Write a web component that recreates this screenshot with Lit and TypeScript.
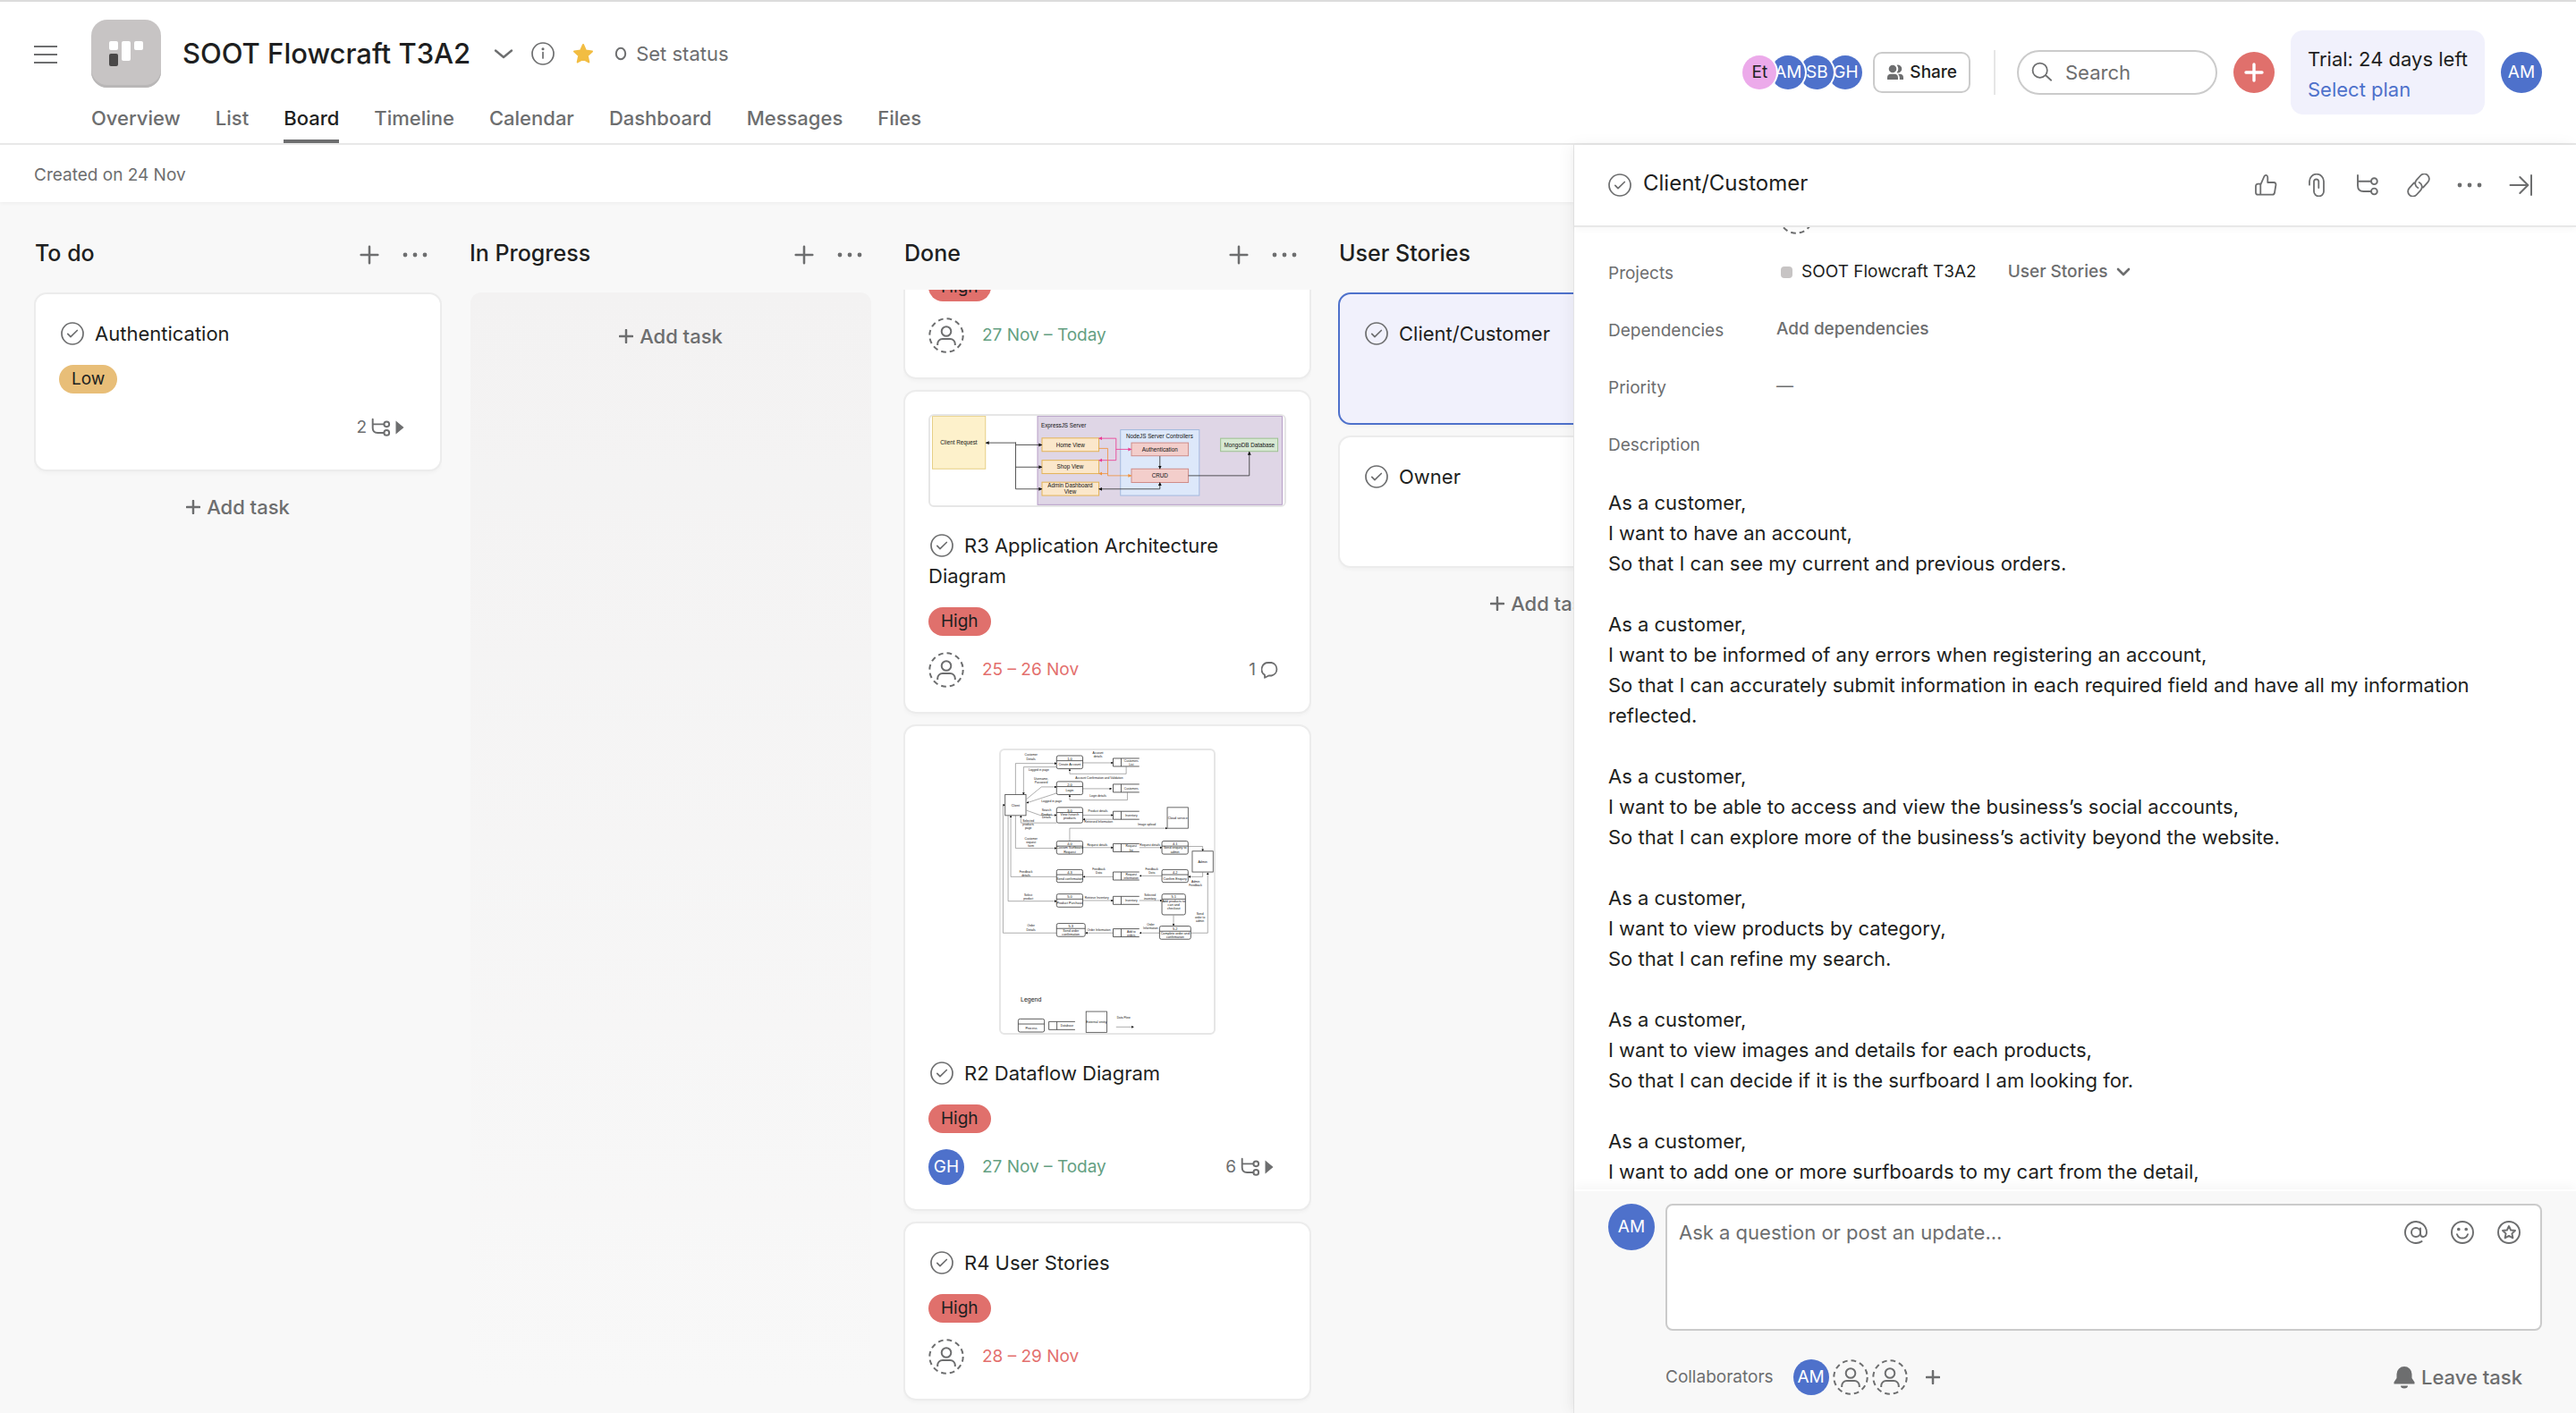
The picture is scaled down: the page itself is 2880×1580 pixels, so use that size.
import { LitElement, html, svg, css, nothing, type TemplateResult } from "lit";
import { customElement, property } from "lit/decorators.js";
import { classMap } from "lit/directives/class-map.js";

/* ---------- icons ---------- */

const line = (size: number, body: TemplateResult, width = 2) => html`
  <svg width=${size} height=${size} viewBox="0 0 26 26" fill="none" stroke="currentColor"
    stroke-width=${width} stroke-linecap="round" stroke-linejoin="round" aria-hidden="true">${body}</svg>`;

const subtaskShape = svg`<path d="M2 2V13.5Q2 20 8.5 20H17M2 8.7H17" /><circle cx="20.4" cy="8.7" r="3.4" /><circle cx="20.4" cy="20" r="3.4" />`;

const icons = {
  menu: html`<svg width="26" height="20" viewBox="0 0 26 20" stroke="currentColor" stroke-width="2" aria-hidden="true">
    <path d="M0 1H26M0 10H26M0 19H26" /></svg>`,
  chevron: html`<svg width="22" height="22" viewBox="0 0 22 22" fill="none" stroke="currentColor" stroke-width="2.4"
    stroke-linecap="round" stroke-linejoin="round" aria-hidden="true"><path d="M2 7.5L11 15L20 7.5" /></svg>`,
  chevronSmall: html`<svg width="16" height="16" viewBox="0 0 16 16" fill="none" stroke="currentColor" stroke-width="2.6"
    stroke-linecap="round" stroke-linejoin="round" aria-hidden="true"><path d="M2 5L8 11L14 5" /></svg>`,
  info: line(26, svg`<circle cx="13" cy="13" r="12" /><path d="M13 11.5V18" /><circle cx="13" cy="7.8" r="0.7" fill="currentColor" />`, 1.7),
  star: html`<svg width="24" height="24" viewBox="0 0 24 24" fill="currentColor" stroke="currentColor" stroke-width="2"
    stroke-linejoin="round" aria-hidden="true">
    <path d="M12 2L15 8.6L22 9.4L16.8 14.2L18.3 21.4L12 17.8L5.7 21.4L7.2 14.2L2 9.4L9 8.6Z" /></svg>`,
  ring: html`<svg width="14" height="16" viewBox="0 0 14 16" fill="none" stroke="currentColor" stroke-width="2"
    aria-hidden="true"><ellipse cx="7" cy="8" rx="5.2" ry="6.2" /></svg>`,
  people: html`<svg width="20" height="18" viewBox="0 0 20 18" fill="currentColor" aria-hidden="true">
    <circle cx="7" cy="5" r="4.3" />
    <path d="M11.6 0.8A4.4 4.4 0 1 1 11.6 9.2A6 6 0 0 0 11.6 0.8Z" />
    <path d="M1 16.5V14.5A4 4 0 0 1 5 10.8H9A4 4 0 0 1 13 14.5V16.5Q13 17 12.5 17H1.500Q1 17 1 16.5Z" />
    <path d="M13 10.8H15A4 4 0 0 1 19 14.5V16.5Q19 17 18.5 17H14.8V14.500A5.500 5.500 0 0 0 13 10.8Z" /></svg>`,
  search: line(24, svg`<circle cx="10.5" cy="10.5" r="8.8" /><path d="M17.5 16.5L24 22.5" />`, 1.9),
  plusBold: line(26, svg`<path d="M13 4V22M4 13H22" />`, 3.4),
  plus: line(22, svg`<path d="M13 2V24M2 13H24" />`, 3),
  plusSmall: line(16, svg`<path d="M13 1.5V24.5M1.5 13H24.5" />`, 4),
  dots: html`<svg width="28" height="6" viewBox="0 0 28 6" fill="currentColor" aria-hidden="true">
    <circle cx="3" cy="3" r="2.4" /><circle cx="14" cy="3" r="2.4" /><circle cx="25" cy="3" r="2.4" /></svg>`,
  check: line(26, svg`<circle cx="13" cy="13" r="12" /><path d="M7.8 13.3L11 16.7L18.3 9.5" />`, 1.7),
  thumb: line(26, svg`<path d="M7.3 11.7H4.5Q2 11.7 2 14.2V21.2Q2 23.7 4.5 23.7H7.3ZM7.3 12.7L11.3 3.5Q12.3 1.6 14 2Q15.3 2.4 15.3 4.5V10H22Q24.8 10.2 24.4 13L23 21.5Q22.6 23.7 20.5 23.7H7.3" />`, 1.8),
  clip: line(26, svg`<path d="M5 12.7V8.7A8 8 0 0 1 21 8.7V20A5.5 5.5 0 0 1 10 20V8.7A2.7 2.7 0 0 1 15.3 8.7V16" />`, 1.8),
  subtask: line(26, subtaskShape, 1.9),
  subtaskSmall: line(22, subtaskShape, 2.3),
  link: line(26, svg`<g transform="rotate(-48 13 13)"><path d="M14.500 18.5H22.5A5.5 5.5 0 0 0 22.5 7.5H15.5A5.5 5.5 0 0 0 10.3 14.5M11.5 7.5H3.5A5.5 5.5 0 0 0 3.5 18.5H10.5A5.5 5.5 0 0 0 15.7 11.5" /></g>`, 1.8),
  collapse: line(26, svg`<path d="M1.5 13H21M12.3 4L21.3 13L12.3 22M25 2V24" />`, 2),
  play: html`<svg width="10" height="16" viewBox="0 0 10 16" fill="currentColor" aria-hidden="true"><path d="M0.5 0.5L9.5 8L0.5 15.5Z" /></svg>`,
  bubble: html`<svg width="20" height="20" viewBox="0 0 20 20" fill="none" stroke="currentColor" stroke-width="1.8"
    stroke-linejoin="round" aria-hidden="true"><path d="M4 15.8A7.5 7.5 0 0 1 8.5 2H11.5A7.4 7.4 0 0 1 11.5 16.5H8.5L4 18.8Z" /></svg>`,
  at: line(26, svg`<circle cx="13" cy="13" r="5" /><path d="M18 8.5V14.5Q18 18 21.3 18Q25 17.5 25 13A12 12 0 1 0 19.5 23.1" />`, 1.9),
  smile: line(26, svg`<circle cx="13" cy="13" r="12" /><path d="M7 15.2Q8.5 19.5 13 19.5Q17.5 19.5 19 15.2" /><circle cx="8.8" cy="9.5" r="0.9" fill="currentColor" /><circle cx="17.2" cy="9.5" r="0.9" fill="currentColor" />`, 1.9),
  starRing: line(26, svg`<circle cx="13" cy="13" r="12" /><path d="M13 6L15.1 10.5L20 11L16.4 14.4L17.4 19.3L13 16.9L8.6 19.3L9.6 14.4L6 11L10.9 10.5Z" />`, 1.9),
  bell: html`<svg width="26" height="26" viewBox="0 0 26 26" fill="currentColor" aria-hidden="true">
    <path d="M13 1A8.5 8.5 0 0 0 4.5 9.5V14L1.5 18.5V20.5H24.5V18.5L21.5 14V9.5A8.5 8.5 0 0 0 13 1ZM9 22.5A4 3 0 0 0 17 22.5Z" /></svg>`,
  person: html`<svg width="40" height="40" viewBox="0 0 40 40" fill="none" stroke="currentColor" stroke-width="2" aria-hidden="true">
    <circle cx="20" cy="20" r="18.7" stroke-dasharray="5.7 4.092" />
    <circle cx="20" cy="15.5" r="5.3" /><path d="M10.2 31V29.5A5.5 5.5 0 0 1 15.7 24H24.3A5.5 5.5 0 0 1 29.8 29.5V31" /></svg>`,
};

/* ---------- attachment previews ---------- */

const box = (x: number, y: number, w: number, h: number, fill: string, stroke: string) =>
  svg`<rect x=${x} y=${y} width=${w} height=${h} fill=${fill} stroke=${stroke} stroke-width="3" />`;
const label = (x: number, y: number, s: string, size = 19) =>
  svg`<text x=${x} y=${y} font-size=${size} text-anchor="middle" fill="#111">${s}</text>`;

const architecture = html`
  <svg class="art" viewBox="29 41 1183 302" font-family="Liberation Sans, Arial, sans-serif" role="img" aria-label="Application architecture">
    <defs>
      <marker id="k" markerWidth="14" markerHeight="14" refX="11" refY="6" orient="auto-start-reverse" markerUnits="userSpaceOnUse"><path d="M0 0L12 6L0 12Z" fill="#111" /></marker>
      <marker id="p" markerWidth="14" markerHeight="14" refX="11" refY="6" orient="auto-start-reverse" markerUnits="userSpaceOnUse"><path d="M0 0L12 6L0 12Z" fill="#ea3a92" /></marker>
      <marker id="o" markerWidth="14" markerHeight="14" refX="11" refY="6" orient="auto-start-reverse" markerUnits="userSpaceOnUse"><path d="M0 0L12 6L0 12Z" fill="#f0923c" /></marker>
    </defs>
    ${box(30, 42, 179, 178, "#fdf1cb", "#e6cf85")}
    ${box(385, 42, 826, 299, "#dfd6e6", "#b59cc6")}
    ${box(665, 88, 266, 222, "#dde8fa", "#a3b9de")}
    ${[116, 191, 265].map((y) => box(400, y, 192, 45, "#fbe7cb", "#e3b356"))}
    ${box(702, 132, 192, 44, "#f3cecb", "#cf8c88")}
    ${box(702, 220, 192, 46, "#f3cecb", "#cf8c88")}
    ${box(1003, 117, 193, 44, "#d7e8d3", "#9cc190")}
    <g fill="none" stroke="#333" stroke-width="2.5">
      <path d="M311 132H210" marker-end="url(#k)" />
      <path d="M311 130V288H400" marker-end="url(#k)" />
      <path d="M311 139H400" marker-end="url(#k)" /><path d="M311 214H400" marker-end="url(#k)" />
      <path d="M798 177V220" marker-end="url(#k)" />
      <path d="M592 288H798V266" marker-start="url(#k)" marker-end="url(#k)" />
      <path d="M894 243H1100V162" marker-end="url(#k)" />
    </g>
    <path d="M592 117H650V191H592" fill="none" stroke="#ea3a92" stroke-width="2.5" marker-start="url(#p)" marker-end="url(#p)" />
    <path d="M650 154H702" fill="none" stroke="#ea3a92" stroke-width="2.5" marker-end="url(#p)" />
    <path d="M592 151H622V243H702" fill="none" stroke="#f0923c" stroke-width="2.5" marker-end="url(#o)" />
    <path d="M622 236H592" fill="none" stroke="#f0923c" stroke-width="2.5" marker-end="url(#o)" />
    ${label(119, 138, "Client Request")}${label(473, 79, "ExpressJS Server")}${label(496, 146, "Home View")}
    ${label(495, 220, "Shop View")}${label(495, 282, "Admin Dashboard")}${label(495, 304, "View")}
    ${label(797, 116, "NodeJS Server Controllers")}${label(798, 161, "Authentication")}
    ${label(798, 249, "CRUD")}${label(1100, 146, "MongoDB Database")}
  </svg>`;

const process = (x: number, y: number, w: number, h: number, id: string, lines: string[]) => svg`
  <rect x=${x} y=${y} width=${w} height=${h} rx="6" fill="#fff" stroke="#444" stroke-width="2.6" />
  <path d="M${x} ${y + 17}H${x + w}" stroke="#444" stroke-width="2.6" />
  ${label(x + w / 2, y + 14, id, 12)}
  ${lines.map((s, i) => label(x + w / 2, y + (lines.length > 1 ? 27 : 34) + i * 13, s, 11))}`;
const store = (y: number, lines: string[], x = 731, w = 88) => svg`
  <path d="M${x + w} ${y}H${x}V${y + 27}H${x + w}M${x + 27} ${y}V${y + 27}" fill="none" stroke="#444" stroke-width="2.6" />
  ${lines.map((s, i) => label(x + 61, y + (lines.length > 1 ? 12 : 18) + i * 13, s, 10))}`;
const entity = (x: number, y: number, s: string) => svg`
  <rect x=${x} y=${y} width="70" height="70" fill="#fff" stroke="#444" stroke-width="2.4" />${label(x + 35, y + 39, s, 11)}`;

const flows = [
  "M403 292V187H541", "M541 199H430V292", "M629 185H731", "M775 198V222H585V206",
  "M440 307L490 266H541", "M541 287L440 320", "M629 272H726", "M779 285V310H585V293",
  "M440 345L485 361H541", "M541 387H421V362", "M629 361H731", "M731 375H630",
  "M585 448V405H913", "M403 362V472H541", "M629 470H731", "M819 470H895", "M984 466H1032V482",
  "M1032 553V568H984", "M895 565H820", "M731 568H630", "M541 568H387V362",
  "M378 362V650H541", "M629 648H731", "M819 648H895", "M934 698V733", "M992 757H1049V554",
  "M887 757H820", "M731 757H638", "M541 757H361V327H368", "M741 1073H800",
];
const notes: [number, number, string][] = [
  [455, 162, "Customer"], [455, 175, "Details"], [680, 154, "Account"], [680, 167, "details"], [481, 213, "Logged in page"],
  [684, 239, "Account Confirmation and Validation"], [489, 241, "Username,"], [489, 254, "Password"], [680, 299, "Login details"],
  [524, 317, "Logged in page"], [507, 348, "Search"], [507, 361, "Product"], [507, 373, "Details"], [680, 351, "Product details"],
  [682, 386, "Retrieved Information"], [446, 383, "Selected"], [446, 396, "products"], [446, 408, "page"], [844, 397, "Image upload"],
  [455, 443, "Customer"], [455, 456, "request"], [455, 468, "form"], [678, 465, "Request details"], [855, 465, "Request details"],
  [438, 554, "Feedback"], [438, 567, "details"], [683, 545, "Feedback"], [683, 557, "Data"], [861, 545, "Feedback"], [861, 557, "Data"],
  [1008, 588, "Admin"], [1008, 601, "Feedback"], [446, 632, "Select"], [446, 644, "product"], [676, 641, "Retrieve Inventory"],
  [855, 632, "Selected"], [855, 644, "inventory"], [1023, 695, "Send"], [1023, 708, "order to"], [1023, 720, "admin"],
  [455, 736, "Order"], [455, 749, "Details"], [683, 751, "Order Information"], [857, 732, "Order"], [857, 744, "Information"], [766, 1046, "Data Flow"],
];

const dataflow = html`
  <svg class="art" viewBox="354 143 715 950" font-family="Liberation Sans, Arial, sans-serif" role="img" aria-label="Dataflow diagram">
    <defs><marker id="a" markerWidth="9" markerHeight="9" refX="7" refY="4" orient="auto" markerUnits="userSpaceOnUse"><path d="M0 0L8 4L0 8Z" fill="#111" /></marker></defs>
    ${flows.map((d) => svg`<path d=${d} fill="none" stroke="#777" stroke-width="1.8" marker-end="url(#a)" />`)}
    ${process(541, 161, 88, 44, "1.0", ["Create Account"])}${process(541, 248, 88, 44, "2.0", ["Login"])}
    ${process(541, 335, 88, 52, "3.0", ["View /search", "products"])}${process(541, 448, 88, 44, "4.0", ["Custom Surfboard", "Request"])}
    ${process(895, 448, 88, 44, "4.1", ["Send enquiry to", "admin"])}${process(541, 544, 88, 43, "4.3", ["Send confirmation"])}
    ${process(895, 544, 88, 43, "4.2", ["Confirm Enquiry"])}${process(541, 626, 88, 44, "5.0", ["Product Purchase"])}
    ${process(895, 626, 79, 70, "5.1", ["Add products to", "cart and", "checkout"])}
    ${process(541, 725, 96, 44, "5.3", ["Send order", "confirmation"])}${process(887, 734, 105, 44, "5.2", ["Complete order and", "confirmation"])}
    ${process(412, 1046, 88, 44, "", ["Process"])}
    ${store(170, ["Customers", "List"])}${store(257, ["Customers"])}${store(348, ["Inventory"])}${store(457, ["Request", "list"])}
    ${store(552, ["Request", "information"])}${store(634, ["Inventory"])}${store(743, ["Add to", "orders"])}${store(1055, ["Database"], 515)}
    ${entity(368, 292, "Client")}${entity(913, 335, "Cloud service")}${entity(997, 482, "Admin")}${entity(640, 1021, "External entity")}
    ${notes.map(([x, y, s]) => label(x, y, s, 10))}
    ${label(455, 989, "Legend", 21)}
  </svg>`;

/* ---------- data ---------- */

interface Task {
  title: string;
  tag?: "High" | "Low";
  cover?: "architecture" | "dataflow";
  owner?: string;
  date?: string;
  late?: boolean;
  subtasks?: number;
  comments?: number;
  selected?: boolean;
}
interface Column { name: string; tasks: Task[]; scroll?: number }

const columns: Column[] = [
  { name: "To do", tasks: [{ title: "Authentication", tag: "Low", subtasks: 2 }] },
  { name: "In Progress", tasks: [] },
  {
    name: "Done",
    scroll: 103,
    tasks: [
      { title: "", tag: "High", date: "27 Nov – Today" },
      { title: "R3 Application Architecture Diagram", cover: "architecture", tag: "High", date: "25 – 26 Nov", late: true, comments: 1 },
      { title: "R2 Dataflow Diagram", cover: "dataflow", tag: "High", owner: "GH", date: "27 Nov – Today", subtasks: 6 },
      { title: "R4 User Stories", tag: "High", date: "28 – 29 Nov", late: true },
    ],
  },
  { name: "User Stories", tasks: [{ title: "Client/Customer", selected: true }, { title: "Owner" }] },
];

const stories = [
  ["I want to have an account,", "So that I can see my current and previous orders."],
  ["I want to be informed of any errors when registering an account,", "So that I can accurately submit information in each required field and have all my information reflected."],
  ["I want to be able to access and view the business’s social accounts,", "So that I can explore more of the business’s activity beyond the website."],
  ["I want to view products by category,", "So that I can refine my search."],
  ["I want to view images and details for each products,", "So that I can decide if it is the surfboard I am looking for."],
  ["I want to add one or more surfboards to my cart from the detail,"],
];

/* ---------- shared styles ---------- */

const base = css`
  * { box-sizing: border-box; }
  button, input, textarea, select { font: inherit; color: inherit; background: none; border: 0; padding: 0; margin: 0; }
  button { display: inline-flex; align-items: center; justify-content: center; cursor: pointer; }
  svg { display: block; flex: none; }
  h1, h2, h3, p { margin: 0; font-weight: inherit; font-size: inherit; }
  a { color: inherit; text-decoration: none; }
  .avatar {
    display: inline-flex; align-items: center; justify-content: center; flex: none;
    width: 40px; height: 40px; border-radius: 50%;
    background: #4e71cb; color: #fff; font-size: 19px; line-height: 24px;
  }
  .avatar.large { width: 52px; height: 52px; }
`;

/* ---------- card ---------- */

@customElement("task-card")
export class TaskCard extends LitElement {
  @property({ attribute: false }) task!: Task;

  static styles = [base, css`
    :host { display: block; }
    .card {
      display: flex; flex-direction: column; align-items: flex-start; gap: 18px;
      min-height: 148px; padding: 27px 26px; border: 2px solid #ececec; border-radius: 14px;
      background: #fff; box-shadow: 0 2px 4px rgba(0, 0, 0, 0.03);
    }
    .card.covered { padding-top: 25px; }
    .card.selected { background: #f1f1fc; border-color: #4e71cb; }
    .cover {
      align-self: center; border: 2px solid #e6e6e6; border-radius: 6px; overflow: hidden; margin-bottom: 8px;
      background: #fff;
    }
    .cover.architecture { width: 100%; height: 104px; }
    .cover.dataflow { width: 242px; height: 320px; }
    .art { width: 100%; height: 100%; }
    .title { font-size: 22px; line-height: 34px; color: #1e1f21; }
    .tick { color: #6d6e6f; vertical-align: -5px; margin: 0 12px 0 2px; }
    .tag { border-radius: 16px; padding: 0 14px; font-size: 19px; line-height: 32px; color: #1e1f21; }
    .high { background: #e0706c; }
    .low { background: #e8be78; }
    .meta { display: flex; align-items: center; align-self: stretch; height: 40px; font-size: 19px; line-height: 24px; color: #6d6e6f; }
    .date { margin-left: 20px; color: #64a082; }
    .date.late { color: #e36f6d; }
    .counts { display: flex; align-items: center; gap: 5px; margin-left: auto; padding-right: 14px; }
    .counts.talk { padding-right: 8px; gap: 6px; }
  `];

  render() {
    const t = this.task;
    return html`
      <article class=${classMap({ card: true, covered: !!t.cover, selected: !!t.selected })}>
        ${t.cover ? html`<div class="cover ${t.cover}">${t.cover === "architecture" ? architecture : dataflow}</div>` : nothing}
        <h3 class="title"><button class="tick" aria-label="Mark complete">${icons.check}</button>${t.title}</h3>
        ${t.tag ? html`
          <span class="tag ${t.tag.toLowerCase()}">${t.tag}</span>
          <div class="meta">
            ${t.date ? html`
              ${t.owner ? html`<span class="avatar">${t.owner}</span>` : icons.person}
              <span class=${classMap({ date: true, late: !!t.late })}>${t.date}</span>` : nothing}
            ${t.subtasks ? html`<span class="counts">${t.subtasks}${icons.subtaskSmall}${icons.play}</span>` : nothing}
            ${t.comments ? html`<span class="counts talk">${t.comments}${icons.bubble}</span>` : nothing}
          </div>` : nothing}
      </article>`;
  }
}

/* ---------- column ---------- */

@customElement("board-column")
export class BoardColumn extends LitElement {
  @property({ attribute: false }) column!: Column;

  static styles = [base, css`
    :host { display: flex; flex-direction: column; flex: 0 0 456px; min-height: 0; color: #6d6e6f; }
    .head { display: flex; align-items: center; gap: 26px; height: 98px; padding: 20px 16px 0 1px; flex: none; }
    .name { flex: 1; font-size: 25px; line-height: 34px; font-weight: 500; color: #1e1f21; padding-bottom: 4px; }
    .list { flex: 1; min-height: 0; overflow-y: auto; scrollbar-width: none; display: flex; flex-direction: column; gap: 12px; padding: 3px 0 24px; }
    .list > * { flex: none; }
    .add { gap: 7px; height: 56px; align-self: center; font-size: 22px; line-height: 34px; font-weight: 500; }
    .list > .empty {
      flex: 1 0 auto; display: flex; flex-direction: column; align-items: center; padding-top: 21px; margin: 0 6px 0 2px;
      border-radius: 12px; background: linear-gradient(#f3f2f2, #f8f8f8);
    }
  `];

  async firstUpdated() {
    const list = this.renderRoot.querySelector<HTMLElement>(".list")!;
    await Promise.all([...this.renderRoot.querySelectorAll<TaskCard>("task-card")].map((c) => c.updateComplete));
    list.scrollTop = this.column.scroll ?? 0;
  }

  render() {
    const c = this.column;
    const add = html`<button class="add">${icons.plusSmall}<span>Add task</span></button>`;
    return html`
      <div class="head">
        <h2 class="name">${c.name}</h2>
        <button aria-label="Add task to ${c.name}">${icons.plus}</button>
        <button aria-label="More actions for ${c.name}">${icons.dots}</button>
      </div>
      <div class="list">
        ${c.tasks.length
          ? html`${c.tasks.map((t) => html`<task-card .task=${t}></task-card>`)}${c.scroll ? nothing : add}`
          : html`<div class="empty">${add}</div>`}
      </div>`;
  }
}

/* ---------- header ---------- */

@customElement("app-header")
export class AppHeader extends LitElement {
  static styles = [base, css`
    :host {
      display: flex; align-items: stretch; justify-content: space-between; padding: 0 38px;
      background: #fff; border-top: 2px solid #dcdcdc; border-bottom: 2px solid #e8e8e8; color: #6d6e6f;
    }
    .left { display: flex; align-items: flex-start; gap: 38px; padding-top: 20px; }
    .menu { height: 78px; }
    .project { display: flex; flex-direction: column; gap: 6px; }
    .top { display: flex; align-items: center; height: 76px; }
    .logo {
      width: 78px; height: 76px; border-radius: 18px; background: #c7c4c4; box-shadow: inset 0 -3px #b9b7b7;
      display: grid; place-items: center; margin-right: 24px;
    }
    .name { font-size: 31px; line-height: 40px; font-weight: 500; color: #1e1f21; margin-right: 26px; }
    .info { margin: 0 20px; }
    .fav { color: #f2bd42; }
    .status { gap: 10px; margin-left: 23px; font-size: 22px; line-height: 34px; }
    .tabs { display: flex; gap: 39px; font-size: 22px; line-height: 34px; font-weight: 500; }
    .tab { height: 56px; padding: 11px 0; }
    .tab.on { color: #1e1f21; box-shadow: inset 0 -4px #6d6e6f; }
    .right { display: flex; align-items: center; }
    .team { display: flex; margin-right: 12px; }
    .team .avatar { position: relative; width: 38px; height: 38px; margin-left: -6px; box-shadow: 0 0 0 2px #fff; }
    .team .avatar:nth-child(1) { z-index: 4; background: #ecaaea; color: #1e1f21; }
    .team .avatar:nth-child(2) { z-index: 3; }
    .team .avatar:nth-child(3) { z-index: 2; }
    .share {
      gap: 6px; height: 46px; padding: 0 13px; border: 2px solid #cbcbcb; border-radius: 10px;
      font-size: 19px; line-height: 24px; font-weight: 500;
    }
    .share span { color: #1e1f21; }
    .rule { width: 2px; height: 50px; background: #e6e6e6; margin: 0 24px 0 26px; }
    .search {
      display: flex; align-items: center; gap: 14px; width: 224px; height: 50px; padding: 0 14px;
      border: 2px solid #cbcbcb; border-radius: 25px; font-size: 22px; line-height: 34px;
    }
    .search input { width: 100%; min-width: 0; outline: none; }
    .search input::placeholder { color: #6d6e6f; opacity: 1; }
    .create { width: 46px; height: 46px; border-radius: 50%; background: #e0706c; color: #fff; margin: 0 18px; }
    .trial { padding: 15px 19px 11px; border-radius: 14px; background: #f1f1fc; font-size: 22px; line-height: 34px; color: #1e1f21; margin-right: 18px; }
    .plan { display: block; color: #4e71cb; }
    .me { width: 46px; height: 46px; }
  `];

  render() {
    return html`
      <div class="left">
        <button class="menu" aria-label="Menu">${icons.menu}</button>
        <div class="project">
          <div class="top">
            <span class="logo"><svg width="40" height="30" viewBox="0 0 40 30" aria-hidden="true">
              <rect x="1" y="1" width="10" height="10" rx="2" fill="#fff" /><rect x="15" y="1" width="10" height="22" rx="2" fill="#fff" />
              <rect x="29" y="1" width="10" height="10" rx="2" fill="#fff" /><rect x="1" y="15" width="10" height="14" rx="2" fill="#4a4848" /></svg></span>
            <h1 class="name">SOOT Flowcraft T3A2</h1>
            <button aria-label="Project actions">${icons.chevron}</button>
            <button class="info" aria-label="Project details">${icons.info}</button>
            <button class="fav" aria-label="Favourite">${icons.star}</button>
            <button class="status">${icons.ring}<span>Set status</span></button>
          </div>
          <nav class="tabs">
            ${["Overview", "List", "Board", "Timeline", "Calendar", "Dashboard", "Messages", "Files"].map(
              (t) => html`<a href="#" class=${classMap({ tab: true, on: t === "Board" })}>${t}</a>`)}
          </nav>
        </div>
      </div>
      <div class="right">
        <div class="team">${["Et", "AM", "SB", "GH"].map((n) => html`<span class="avatar">${n}</span>`)}</div>
        <button class="share">${icons.people}<span>Share</span></button>
        <span class="rule"></span>
        <label class="search">${icons.search}<input type="text" placeholder="Search" aria-label="Search" /></label>
        <button class="create" aria-label="Create">${icons.plusBold}</button>
        <div class="trial">Trial: 24 days left<a class="plan" href="#">Select plan</a></div>
        <button class="avatar me">AM</button>
      </div>`;
  }
}

/* ---------- task details ---------- */

@customElement("task-pane")
export class TaskPane extends LitElement {
  static styles = [base, css`
    :host {
      display: flex; flex-direction: column; min-width: 0; min-height: 0; background: #fff; color: #6d6e6f;
      position: relative; z-index: 1; box-shadow: -1px 0 #e4e4e4, -4px 0 16px rgba(0, 0, 0, 0.05);
      font-size: 19px; line-height: 24px;
    }
    .head {
      display: flex; align-items: center; height: 92px; flex: none; padding: 0 49px 0 38px;
      border-bottom: 2px solid #e8e8e8; box-shadow: 0 2px 8px rgba(0, 0, 0, 0.04); position: relative;
    }
    .name { font-size: 24px; line-height: 34px; color: #1e1f21; margin: 0 auto 4px 13px; }
    .tools { display: flex; gap: 31px; }
    .tools button { width: 26px; height: 26px; }
    .body { flex: 1; min-height: 0; overflow-y: auto; scrollbar-width: none; padding: 0 38px 40px; }
    .row { display: grid; grid-template-columns: 188px 1fr; align-items: center; height: 64px; }
    .value { display: flex; align-items: center; padding-bottom: 4px; }
    .who { padding: 0 0 0 2px; }
    .dot { width: 13px; height: 13px; border-radius: 4px; background: #c7c4c4; margin: 0 10px 0 5px; }
    .link { color: #1e1f21; margin-right: 35px; }
    .strong, select { font-weight: 500; }
    select { appearance: none; margin-right: 9px; line-height: 24px; }
    .story { font-size: 22px; line-height: 34px; color: #1e1f21; margin: 0 0 34px; }
    .story:first-of-type { margin-top: 15px; }
    .foot {
      flex: none; display: grid; grid-template-columns: 52px 1fr; column-gap: 12px; row-gap: 32px; align-items: start;
      padding: 14px 38px 20px; background: #f8f8f8; border-top: 2px solid #fff; position: relative;
      box-shadow: 0 -4px 12px rgba(0, 0, 0, 0.04);
    }
    .reply {
      display: flex; align-items: flex-start; gap: 26px; height: 142px; padding: 13px 22px 13px 13px;
      background: #fff; border: 2px solid #cbcbcb; border-radius: 8px; font-size: 22px; line-height: 34px;
    }
    .reply textarea { flex: 1; height: 100%; resize: none; outline: none; }
    .reply textarea::placeholder { color: #6d6e6f; opacity: 1; }
    .reply button { height: 34px; }
    .people { grid-column: 2; display: flex; align-items: center; gap: 4px; height: 40px; }
    .people > span:first-child { margin-right: 18px; }
    .more { margin-left: 16px; }
    .leave { gap: 6px; margin: 0 22px 0 auto; font-size: 22px; line-height: 34px; font-weight: 500; }
  `];

  firstUpdated() {
    this.renderRoot.querySelector(".body")!.scrollTop = 44;
  }

  render() {
    return html`
      <div class="head">
        <button aria-label="Mark complete">${icons.check}</button>
        <h2 class="name">Client/Customer</h2>
        <div class="tools">
          <button aria-label="Like">${icons.thumb}</button>
          <button aria-label="Attach">${icons.clip}</button>
          <button aria-label="Subtasks">${icons.subtask}</button>
          <button aria-label="Copy link">${icons.link}</button>
          <button aria-label="More">${icons.dots}</button>
          <button aria-label="Close details">${icons.collapse}</button>
        </div>
      </div>
      <div class="body">
        <div class="row"><span></span><div class="value who">${icons.person}</div></div>
        <div class="row"><span>Projects</span>
          <div class="value"><i class="dot"></i><a class="link" href="#">SOOT Flowcraft T3A2</a>
            <select aria-label="Section"><option>User Stories</option></select>${icons.chevronSmall}</div></div>
        <div class="row"><span>Dependencies</span><div class="value"><button class="strong">Add dependencies</button></div></div>
        <div class="row"><span>Priority</span><div class="value">—</div></div>
        <div class="row"><span>Description</span></div>
        ${stories.map((s) => html`<p class="story">As a customer,${s.map((l) => html`<br />${l}`)}</p>`)}
      </div>
      <div class="foot">
        <span class="avatar large">AM</span>
        <div class="reply">
          <textarea aria-label="Comment" placeholder="Ask a question or post an update..."></textarea>
          <button aria-label="Mention">${icons.at}</button>
          <button aria-label="Emoji">${icons.smile}</button>
          <button aria-label="Appreciation">${icons.starRing}</button>
        </div>
        <div class="people">
          <span>Collaborators</span><span class="avatar">AM</span>${icons.person}${icons.person}
          <button class="more" aria-label="Add collaborator">${icons.plusSmall}</button>
          <button class="leave">${icons.bell}<span>Leave task</span></button>
        </div>
      </div>`;
  }
}

/* ---------- page ---------- */

@customElement("app-root")
export class AppRoot extends LitElement {
  static styles = [base, css`
    :host {
      display: flex; flex-direction: column; height: 100vh; overflow: hidden; background: #f8f8f8;
      font-family: Inter, "Liberation Sans", sans-serif; color: #6d6e6f;
    }
    .main { flex: 1; min-height: 0; display: grid; grid-template-columns: 11fr 7fr; grid-template-rows: minmax(0, 1fr); }
    .board { display: flex; flex-direction: column; min-width: 0; min-height: 0; overflow: hidden; }
    .bar { flex: none; background: #fff; height: 64px; padding: 20px 38px; font-size: 19px; line-height: 28px; box-shadow: 0 1px 4px rgba(0, 0, 0, 0.05); }
    .columns { flex: 1; min-height: 0; display: flex; gap: 30px; padding: 0 38px; }
  `];

  render() {
    return html`
      <app-header></app-header>
      <div class="main">
        <div class="board">
          <div class="bar">Created on 24 Nov</div>
          <div class="columns">${columns.map((c) => html`<board-column .column=${c}></board-column>`)}</div>
        </div>
        <task-pane></task-pane>
      </div>`;
  }
}
